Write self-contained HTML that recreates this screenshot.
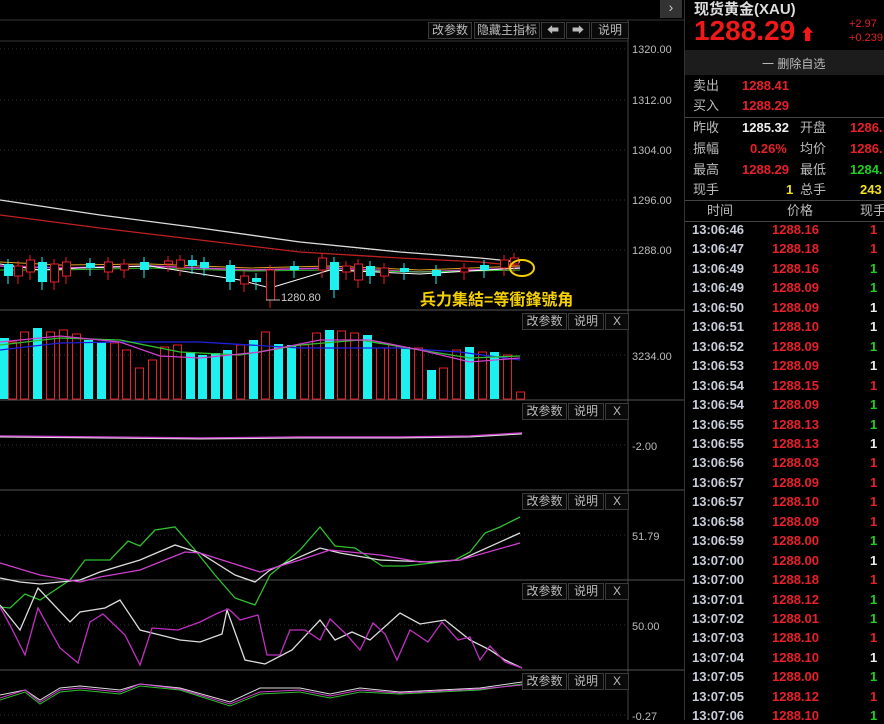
<!DOCTYPE html>
<html><head><meta charset="utf-8">
<style>
html,body{margin:0;padding:0;background:#000;width:884px;height:720px;overflow:hidden;font-family:"Liberation Sans","Noto Sans CJK SC",sans-serif;}
.a{position:absolute;white-space:nowrap;}
.btn{position:absolute;height:17px;border:1px solid #3a3a3a;background:#0a0a0a;color:#bbb;font-size:12px;line-height:15px;text-align:center;box-sizing:border-box;}
.ax{position:absolute;left:632px;color:#bbb;font-size:11px;font-family:"Liberation Sans Narrow","Liberation Sans",sans-serif;}
.rp{position:absolute;font-size:13px;line-height:16px;white-space:nowrap;}
</style></head><body>
<svg id="s" width="684" height="720" style="position:absolute;left:0;top:0">
</svg>
<div class="btn" style="left:660px;top:0;width:22px;height:18px;background:#333;color:#ccc;border:none;font-size:14px">›</div>
<div class="btn" style="left:428px;top:22px;width:44px">改参数</div>
<div class="btn" style="left:474px;top:22px;width:66px">隐藏主指标</div>
<div class="btn" style="left:541px;top:22px;width:24px">⬅</div>
<div class="btn" style="left:566px;top:22px;width:24px">➡</div>
<div class="btn" style="left:591px;top:22px;width:38px">说明</div>
<div class="ax" style="top:44px">1320.00</div>
<div class="ax" style="top:95px">1312.00</div>
<div class="ax" style="top:145px">1304.00</div>
<div class="ax" style="top:195px">1296.00</div>
<div class="ax" style="top:245px">1288.00</div>
<div class="ax" style="top:351px">3234.00</div>
<div class="ax" style="top:441px">-2.00</div>
<div class="ax" style="top:531px">51.79</div>
<div class="ax" style="top:621px">50.00</div>
<div class="ax" style="top:711px">-0.27</div>
<div class="a" style="left:281px;top:292px;color:#ccc;font-size:11px">1280.80</div>
<div class="a" style="left:420px;top:286px;color:#f5d000;font-size:16px;font-weight:bold">兵力集結=等衝鋒號角</div>
<div id="btns"></div>
<div style="position:absolute;left:684px;top:0;width:200px;height:720px;background:#000;border-left:1px solid #333"></div>
<div class="a" style="left:694px;top:-2px;color:#ddd;font-size:15px;font-weight:bold">现货黄金(XAU)</div>
<div class="a" style="left:694px;top:15px;color:#f01818;font-size:28px;font-weight:bold">1288.29<span style="font-size:16px"> ⬆</span></div>
<div class="a" style="left:849px;top:18px;color:#e02020;font-size:11px">+2.97</div>
<div class="a" style="left:849px;top:32px;color:#e02020;font-size:11px">+0.239</div>
<div style="position:absolute;left:685px;top:50px;width:199px;height:25px;background:#1c1c1c"></div>
<div class="a" style="left:762px;top:55px;color:#bbb;font-size:12px">一 删除自选</div>
<div style="position:absolute;left:685px;top:117px;width:199px;height:1px;background:#444"></div>
<div style="position:absolute;left:685px;top:200px;width:199px;height:1px;background:#444"></div>
<div style="position:absolute;left:685px;top:221px;width:199px;height:1px;background:#444"></div>
<div id="rp"></div>
<script>
var R='#e8202a',G='#20d020',W='#eee',Y='#f0e020',C='#1ef0f0';
var h='';
function t(x,y,s,c,b){h+='<div class="rp" style="left:'+x+'px;top:'+(y-8)+'px;color:'+c+(b?';font-weight:bold':'')+'">'+s+'</div>';}
t(693,86,'卖出','#bbb');t(742,86,'1288.41',R,1);
t(693,106,'买入','#bbb');t(742,106,'1288.29',R,1);
t(693,128,'昨收','#bbb');t(742,128,'1285.32',W,1);t(800,128,'开盘','#bbb');t(850,128,'1286.',R,1);
t(693,149,'振幅','#bbb');t(750,149,'0.26%',R,1);t(800,149,'均价','#bbb');t(850,149,'1286.',R,1);
t(693,170,'最高','#bbb');t(742,170,'1288.29',R,1);t(800,170,'最低','#bbb');t(850,170,'1284.',G,1);
t(693,190,'现手','#bbb');t(786,190,'1',Y,1);t(800,190,'总手','#bbb');t(860,190,'243',Y,1);
t(707,211,'时间','#bbb');t(787,211,'价格','#bbb');t(860,211,'现手','#bbb');
var tm=['13:06:46','13:06:47','13:06:49','13:06:49','13:06:50','13:06:51','13:06:52','13:06:53','13:06:54','13:06:54','13:06:55','13:06:55','13:06:56','13:06:57','13:06:57','13:06:58','13:06:59','13:07:00','13:07:00','13:07:01','13:07:02','13:07:03','13:07:04','13:07:05','13:07:05','13:07:06'];
var pr=['1288.16','1288.18','1288.16','1288.09','1288.09','1288.10','1288.09','1288.09','1288.15','1288.09','1288.13','1288.13','1288.03','1288.09','1288.10','1288.09','1288.00','1288.00','1288.18','1288.12','1288.01','1288.10','1288.10','1288.00','1288.12','1288.10'];
var vc='RRGGWWGWRGGWRRRRGWRGGRWGRG';
for(var i=0;i<26;i++){var y=230+i*19.45;t(692,y,tm[i],'#c8ccd8',1);t(772,y,pr[i],R,1);t(870,y,'1',vc[i]=='R'?R:vc[i]=='G'?G:W,1);}
document.getElementById('rp').innerHTML=h;
var b='';[313,403,493,583,673].forEach(function(y){b+='<div class="btn" style="left:522px;top:'+y+'px;width:45px">改参数</div><div class="btn" style="left:568px;top:'+y+'px;width:36px">说明</div><div class="btn" style="left:605px;top:'+y+'px;width:24px">X</div>';});
document.getElementById('btns').innerHTML=b;
var s='';
function L(x1,y1,x2,y2,c,w){s+='<line x1="'+x1+'" y1="'+y1+'" x2="'+x2+'" y2="'+y2+'" stroke="'+c+'" stroke-width="'+(w||1)+'"/>';}
function P(pts,c,w){s+='<polyline fill="none" stroke="'+c+'" stroke-width="'+(w||1)+'" points="'+pts+'"/>';}
L(0,20,684,20,'#333');L(0,41,628,41,'#333');
L(628,20,628,720,'#444');
[310,400,490,580,670].forEach(function(y){L(0,y,684,y,'#555');});
[49,100,150,200,250].forEach(function(y){s+='<line x1="0" y1="'+y+'" x2="628" y2="'+y+'" stroke="#333" stroke-dasharray="1,3"/>';});
[355,445,535,625,715].forEach(function(y){s+='<line x1="0" y1="'+y+'" x2="628" y2="'+y+'" stroke="#333" stroke-dasharray="1,3"/>';});
P('0,200 100,215 200,228 300,242 400,252 480,258 520,262','#ddd',1.3);
P('0,215 100,228 200,240 300,252 400,258 480,262 520,266','#c02020',1.3);
P('0,262 60,265 150,264 250,268 330,266 420,270 520,266','#e0a020');
P('0,266 60,268 150,266 250,270 330,268 420,272 520,268','#d040d0',1.5);
P('0,270 60,270 150,268 250,271 330,270 420,272 520,270','#30c030');
P('0,264 40,270 80,268 150,266 240,280 270,288 330,270 420,274 520,268','#fff');
var cd=[[4,264,276,C],[14,266,276,R],[26,260,272,R],[38,262,282,C],[50,264,282,R],[62,262,276,R],[86,263,268,C],[104,262,272,R],[120,264,270,R],[140,262,270,C],[164,261,264,R],[176,260,268,R],[188,260,266,C],[200,262,268,C],[226,265,282,C],[240,276,284,R],[252,278,282,C],[266,270,300,R],[290,266,270,C],[318,258,270,R],[330,262,290,C],[342,266,272,R],[354,264,280,R],[366,266,276,C],[380,268,276,R],[400,268,272,C],[432,270,276,C],[460,268,272,R],[480,265,270,C],[500,260,268,R],[510,258,264,R]];
cd.forEach(function(c){var x=c[0];L(x+4,c[1]-5,x+4,c[2]+8,c[3]);if(c[3]==C)s+='<rect x="'+x+'" y="'+c[1]+'" width="9" height="'+(c[2]-c[1])+'" fill="'+C+'"/>';else s+='<rect x="'+(x+.5)+'" y="'+c[1]+'" width="8" height="'+(c[2]-c[1])+'" fill="#000" stroke="'+R+'"/>';});
L(266,300,280,300,'#bbb');
s+='<ellipse cx="522" cy="268" rx="12" ry="8" fill="none" stroke="#f5d000" stroke-width="2"/>';
var vb=[[0,338,C],[8,342,R],[20,332,R],[33,328,C],[46,332,R],[59,330,R],[72,334,R],[84,340,C],[97,342,C],[110,343,R],[122,350,R],[135,368,R],[148,360,R],[160,347,R],[173,345,R],[186,352,C],[198,355,C],[211,353,C],[223,350,C],[236,345,R],[249,340,C],[261,332,R],[274,344,C],[287,345,C],[300,345,R],[312,333,R],[325,330,C],[337,331,R],[350,333,R],[363,335,C],[376,348,R],[388,345,R],[401,347,C],[414,348,R],[427,370,C],[439,368,R],[452,350,R],[465,347,C],[478,352,R],[490,352,C],[503,355,R],[516,392,R]];
vb.forEach(function(v){if(v[2]==C)s+='<rect x="'+v[0]+'" y="'+v[1]+'" width="9" height="'+(399-v[1])+'" fill="'+C+'"/>';else s+='<rect x="'+(v[0]+.5)+'" y="'+v[1]+'" width="8" height="'+(399-v[1])+'" fill="none" stroke="'+R+'"/>';});
P('0,350 60,343 120,342 200,342 300,348 400,348 460,352 520,360','#2020e0',1.3);
P('0,345 60,338 120,340 180,352 240,355 300,345 360,340 420,350 470,358 520,356','#30c030',1.3);
P('0,342 60,336 120,342 160,356 200,358 260,352 320,340 370,340 420,350 470,362 520,358','#d040d0',1.3);
P('0,436 100,437 200,438 300,437 400,437 470,436 522,433','#d040d0',1.5);
P('0,437 100,438 200,439 300,438 400,438 470,437 522,434','#ddd');
P('0,607 10,608 25,594 40,600 70,580 85,560 110,560 128,541 140,546 155,530 175,527 195,550 215,575 235,598 255,605 270,575 300,550 320,527 335,546 355,548 382,566 405,566 432,563 455,560 470,552 485,533 500,527 520,517','#30c030',1.3);
P('0,578 20,582 40,584 80,580 100,572 140,560 175,545 200,553 235,575 255,582 270,570 320,548 340,553 380,560 430,562 460,560 520,533','#ddd',1.3);
P('0,563 40,575 80,582 100,577 140,570 185,552 200,553 260,572 300,560 330,550 380,555 420,562 460,560 520,543','#d040d0',1.3);
P('0,605 20,630 38,588 70,622 80,612 105,608 120,600 140,630 160,635 180,640 200,642 222,634 227,610 245,660 265,664 292,650 320,620 335,640 352,632 370,640 400,613 420,624 445,620 470,640 490,650 505,660 522,668','#ddd',1.3);
P('0,607 10,625 25,655 38,608 60,648 78,663 90,622 103,614 125,635 140,665 152,628 178,630 200,622 218,613 228,609 232,612 240,620 258,615 267,655 280,655 290,630 305,630 320,640 330,619 345,633 360,650 373,623 385,634 397,660 410,630 428,642 442,622 458,640 470,637 480,660 490,646 505,662 522,668','#c030c0',1.3);
P('0,695 25,690 40,700 60,688 80,686 120,690 140,684 180,688 230,702 260,688 300,688 330,694 360,688 400,692 440,690 480,688 522,682','#ddd');
P('0,700 25,692 40,704 60,692 80,690 120,694 140,686 180,690 230,706 260,694 300,692 330,698 360,692 400,694 440,692 480,690 522,684','#30c030');
P('0,698 25,690 40,702 60,690 80,688 120,692 140,684 180,689 230,704 260,692 300,690 330,696 360,690 400,693 440,691 480,689 522,685','#d040d0');
document.getElementById('s').innerHTML=s;
</script>
</body></html>
